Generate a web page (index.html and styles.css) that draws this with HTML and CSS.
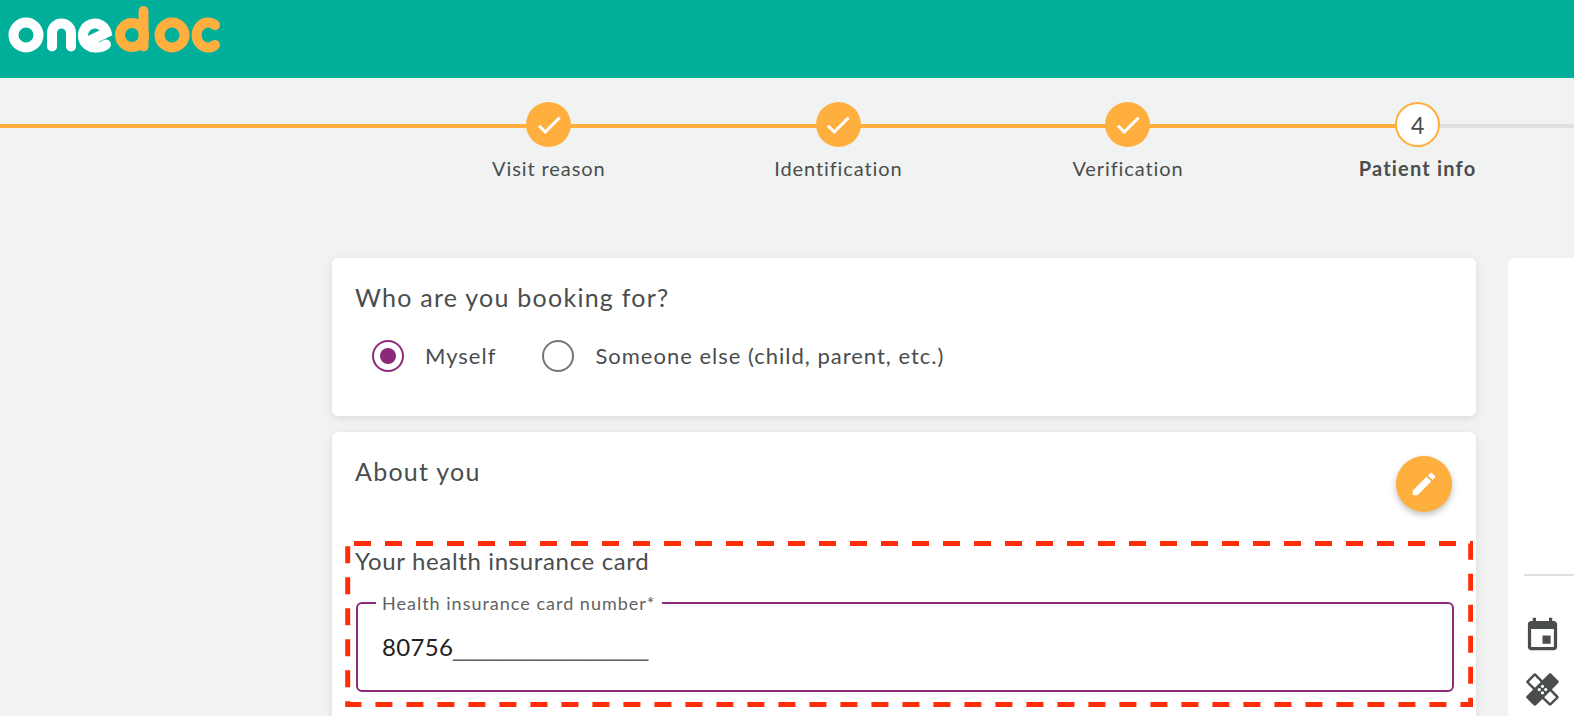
FILE: index.html
```html
<!DOCTYPE html>
<html lang="en">
<head>
<meta charset="utf-8">
<title>OneDoc</title>
<link rel="stylesheet" href="styles.css">
</head>
<body>
<header class="topbar">
  <svg class="logo" viewBox="0 0 228 60" role="img" aria-label="onedoc">
    <g class="logo-white">
      <circle cx="26" cy="35" r="12.5"/>
      <path d="M52 46.5V33a9.5 9.5 0 0 1 19 0v13.500"/>
      <path d="M89 41L106.500 32.500A12 12 0 1 0 96.500 47.500C100 47.500 103.500 46.500 106 44.500"/>
    </g>
    <g class="logo-orange">
      <circle cx="132" cy="35" r="12"/>
      <path d="M143.500 11V46.500"/>
      <circle cx="172" cy="35" r="12.500"/>
      <path d="M215 25A11.500 12.500 0 1 0 215 45"/>
    </g>
  </svg>
</header>

<nav class="stepper">
  <div class="step">
    <span class="dot dot-done"><svg class="check" viewBox="0 0 24 24"><path d="M9 16.170L4.830 12l-1.420 1.410L9 19 21 7l-1.410-1.410z"/></svg></span>
    <span class="step-label">Visit reason</span>
  </div>
  <div class="step">
    <span class="dot dot-done"><svg class="check" viewBox="0 0 24 24"><path d="M9 16.170L4.830 12l-1.420 1.410L9 19 21 7l-1.410-1.410z"/></svg></span>
    <span class="step-label">Identification</span>
  </div>
  <div class="step">
    <span class="dot dot-done"><svg class="check" viewBox="0 0 24 24"><path d="M9 16.170L4.830 12l-1.420 1.410L9 19 21 7l-1.410-1.410z"/></svg></span>
    <span class="step-label">Verification</span>
  </div>
  <div class="step">
    <span class="dot dot-active">4</span>
    <span class="step-label step-label-active">Patient info</span>
  </div>
</nav>

<main class="layout">
  <div class="column">
    <section class="card card-booking">
      <h2 class="card-title">Who are you booking for?</h2>
      <div class="radios">
        <label class="radio">
          <span class="radio-ring radio-ring-on"><span class="radio-fill"></span></span>
          <span>Myself</span>
        </label>
        <label class="radio">
          <span class="radio-ring"></span>
          <span>Someone else (child, parent, etc.)</span>
        </label>
      </div>
    </section>

    <section class="card card-about">
      <div class="about-head">
        <h2 class="card-title">About you</h2>
        <button class="fab" type="button" aria-label="Edit">
          <svg class="fab-icon" viewBox="0 0 24 24"><path d="M3 17.250V21h3.750L17.810 9.940l-3.750-3.750L3 17.250zM20.710 7.040c.39-.39.39-1.020 0-1.410l-2.340-2.340c-.39-.39-1.020-.39-1.410 0l-1.830 1.830 3.750 3.750 1.830-1.830z"/></svg>
        </button>
      </div>
      <h3 class="sub-title">Your health insurance card</h3>
      <fieldset class="field">
        <legend class="field-legend">Health insurance card number*</legend>
        <div class="field-value">80756<span class="field-mask">_______________</span></div>
      </fieldset>
      <svg class="highlight" viewBox="0 0 1128 166"><path d="M2.700 2.500H1125.700V163.500H2.700Z"/></svg>
    </section>
  </div>

  <aside class="side">
    <hr class="side-rule">
    <svg class="side-icon" viewBox="0 0 24 24"><path d="M17 12h-5v5h5v-5zM16 1v2H8V1H6v2H5c-1.110 0-1.990.9-1.990 2L3 19c0 1.100.89 2 2 2h14c1.100 0 2-.9 2-2V5c0-1.100-.9-2-2-2h-1V1h-2zm3 18H5V8h14v11z"/></svg>
    <svg class="side-icon side-icon-last" viewBox="0 0 24 24"><path d="M17.730 12.020l3.980-3.980c.39-.39.39-1.020 0-1.410l-4.340-4.340c-.39-.39-1.020-.39-1.410 0l-3.980 3.980L8 2.290C7.800 2.100 7.550 2 7.290 2c-.25 0-.51.1-.7.29L2.250 6.630c-.39.39-.39 1.020 0 1.410l3.980 3.980L2.250 16c-.39.39-.39 1.020 0 1.410l4.340 4.340c.39.39 1.020.39 1.410 0l3.980-3.980 3.980 3.980c.2.2.45.29.71.29.26 0 .51-.1.71-.29l4.340-4.340c.39-.39.39-1.020 0-1.410l-3.980-3.980zM12 9c.55 0 1 .45 1 1s-.45 1-1 1-1-.45-1-1 .45-1 1-1zm-4.710 1.960L3.660 7.340l3.630-3.630 3.620 3.620-3.620 3.630zM10 13c-.55 0-1-.45-1-1s.45-1 1-1 1 .45 1 1-.45 1-1 1zm2 2c-.55 0-1-.45-1-1s.45-1 1-1 1 .45 1 1-.45 1-1 1zm2-4c.55 0 1 .45 1 1s-.45 1-1 1-1-.45-1-1 .45-1 1-1zm2.660 9.340l-3.630-3.620 3.630-3.630 3.620 3.620-3.620 3.630z"/></svg>
  </aside>
</main>
</body>
</html>
```

FILE: styles.css
```css
* { box-sizing: border-box; }

html, body {
  margin: 0;
  height: 716px;
  overflow: hidden;
}

body {
  background: #f1f3f2;
  color: #4a4d4e;
  font-family: "Lato", "Liberation Sans", sans-serif;
}

.topbar {
  height: 78px;
  background: #00af9a;
}

.logo {
  display: block;
  width: 228px;
  height: 60px;
}

.logo g {
  fill: none;
  stroke-width: 10;
  stroke-linecap: round;
}

.logo-white { stroke: #fff; }
.logo-orange { stroke: #ffaf3d; }

.stepper {
  display: flex;
  height: 180px;
  padding: 24px 0 0 404px;
  background:
    linear-gradient(#ffaf3d, #ffaf3d) no-repeat 0 46px / 1417px 4px,
    linear-gradient(#e0e0e0, #e0e0e0) no-repeat 0 46px / 100% 4px;
}

.step {
  display: flex;
  flex: 0 0 289.6px;
  flex-direction: column;
  align-items: center;
  min-width: 0;
}

.dot {
  display: flex;
  width: 45px;
  height: 45px;
  align-items: center;
  justify-content: center;
  border-radius: 50%;
}

.dot-done { background: #ffaf3d; }

.dot-active {
  border: 2px solid #ffaf3d;
  background: #fff;
  font-size: 23px;
}

.check {
  width: 30px;
  height: 30px;
  fill: #fff;
  stroke: #fff;
  stroke-width: .5;
}

.step-label {
  margin-top: 9px;
  font-size: 20px;
  line-height: 24px;
  letter-spacing: .9px;
  white-space: nowrap;
}

.step-label-active {
  font-weight: 700;
  letter-spacing: 1.2px;
}

.layout {
  display: flex;
  gap: 32px;
  padding-left: 332px;
}

.column {
  display: flex;
  flex: 0 0 1144px;
  flex-direction: column;
  gap: 16px;
}

.card {
  position: relative;
  border-radius: 6px;
  background: #fff;
  box-shadow: 0 2px 8px rgba(0, 0, 0, .1);
}

.card-booking {
  height: 158px;
  padding: 24px 23px 0;
}

.card-about {
  height: 284px;
  padding: 24px 23px 0;
  border-radius: 6px 6px 0 0;
}

.card-title {
  margin: 0;
  font-size: 25px;
  font-weight: 400;
  line-height: 30px;
  letter-spacing: 1.25px;
}

.radios {
  display: flex;
  gap: 46px;
  padding: 28px 0 0 17px;
}

.radio {
  display: flex;
  align-items: center;
  gap: 21px;
  font-size: 22px;
  line-height: 32px;
  letter-spacing: 1px;
}

.radio-ring {
  display: flex;
  width: 32px;
  height: 32px;
  align-items: center;
  justify-content: center;
  border: 2px solid #757575;
  border-radius: 50%;
}

.radio-ring-on { border-color: #8b2a7a; }

.radio-fill {
  width: 16px;
  height: 16px;
  border-radius: 50%;
  background: #8b2a7a;
}

.about-head {
  display: flex;
  justify-content: space-between;
  align-items: flex-start;
  height: 90px;
}

.fab {
  display: flex;
  width: 56px;
  height: 56px;
  align-items: center;
  justify-content: center;
  margin-right: 1px;
  padding: 0;
  border: 0;
  border-radius: 50%;
  background: #ffaf3d;
  box-shadow: 0 3px 6px rgba(0, 0, 0, .25);
}

.fab-icon {
  width: 30px;
  height: 30px;
  fill: #fff;
}

.sub-title {
  margin: 0;
  font-size: 24px;
  font-weight: 400;
  line-height: 30px;
  letter-spacing: .65px;
}

.field {
  height: 99px;
  margin: 17px -1px 0 1px;
  padding: 0 0 0 18px;
  border: 2px solid #8b2a7a;
  border-radius: 6px;
}

.field-legend {
  padding: 0 6px;
  color: #5f6263;
  font-size: 18px;
  line-height: 20px;
  letter-spacing: 1px;
}

.field-value {
  margin: 19px 0 0 6px;
  color: #212121;
  font-size: 24px;
  line-height: 30px;
  letter-spacing: .3px;
}

.field-mask {
  color: #5f6263;
  font-family: "Liberation Sans", sans-serif;
  font-size: 23.4px;
  letter-spacing: 0;
}

.highlight {
  position: absolute;
  left: 13px;
  top: 109px;
  width: 1128px;
  height: 166px;
  fill: none;
  stroke: #ff2d08;
  stroke-width: 5;
  stroke-dasharray: 17 14;
  stroke-dashoffset: 24.7;
}

.side {
  display: flex;
  flex: 1;
  min-width: 0;
  flex-direction: column;
  height: 458px;
  padding: 316px 0 0 16px;
  border-radius: 6px 0 0 0;
  background: #fff;
}

.side-rule {
  width: 100%;
  height: 2px;
  margin: 0 0 40px;
  border: 0;
  background: #e0e0e0;
}

.side-icon {
  display: block;
  flex: none;
  width: 39px;
  height: 39px;
  margin: 0 0 15px -1px;
  fill: #4a4d4e;
}

.side-icon-last { margin-bottom: 0; }
```
